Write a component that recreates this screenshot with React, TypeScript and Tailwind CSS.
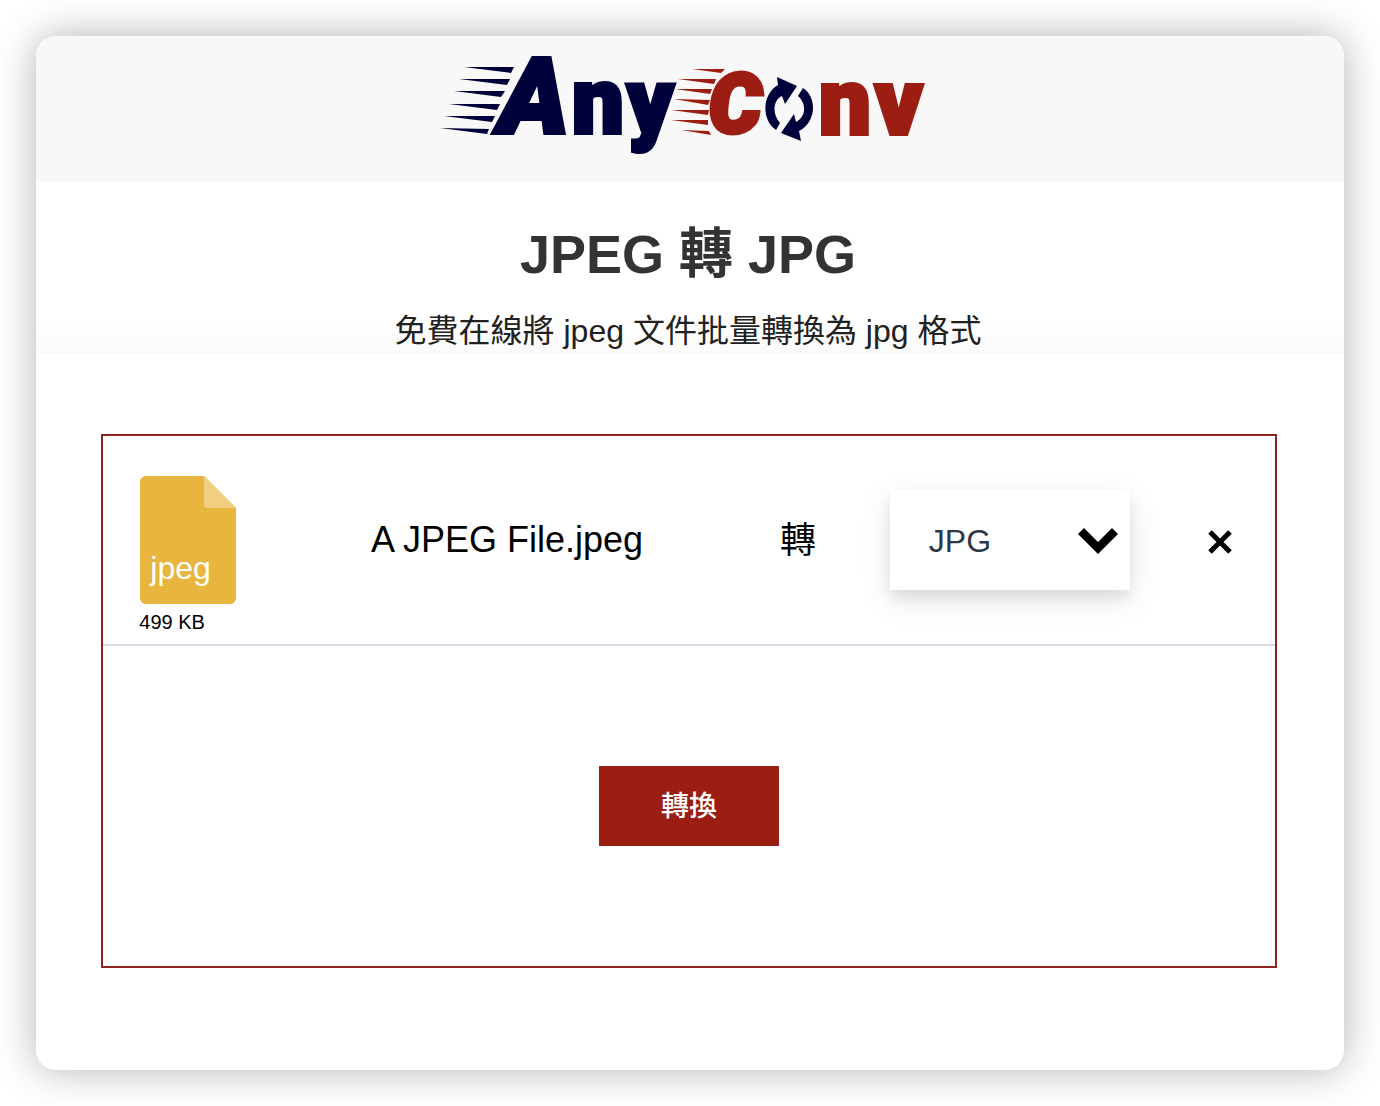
import { useState } from "react";

const NAVY_STREAKS = [
  "464,67 514,67 511,73",
  "459,79 510,79 507,85",
  "454,91 505,91 501,97",
  "449,104 500,104 497,110",
  "444,116 495,116 492,122",
  "440,128 489,129 487,134",
];

const RED_STREAKS = [
  "692,69 725,69 721,73",
  "678,79 716,79 714,84",
  "675,89 712,89 710,94",
  "674,99 710,100 708,105",
  "671,110 709,110 708,115",
  "671,120 708,120 708,125",
  "681,130 709,131 711,135",
];

function Logo() {
  return (
    <svg
      viewBox="440 36 486 146"
      width="486"
      height="146"
      role="img"
      aria-label="AnyConv"
      className="overflow-visible font-['Roboto','Liberation_Sans',sans-serif] font-black"
    >
      <g fill="#00003a">
        {NAVY_STREAKS.map((points) => (
          <polygon key={points} points={points} />
        ))}
        <g stroke="#00003a" strokeWidth="4">
          <text x="499" y="133" fontSize="106" fontStyle="italic">A</text>
          <text x="572" y="133" fontSize="92">n</text>
          <text x="627" y="133" fontSize="90">y</text>
        </g>
        {/* Circular arrows stand in for the "o" */}
        <path d="M777 77 797 86 785 104 782 96C774 99 771 113 780 123L776 130C762 121 761 95 778 85Z" />
        <path d="M803 88C817 97 817 122 799 131L801 141 781 133 794 114 796 122C806 117 807 104 798 96Z" />
      </g>
      <g fill="#9c1e13">
        {RED_STREAKS.map((points) => (
          <polygon key={points} points={points} />
        ))}
        <g stroke="#9c1e13" strokeWidth="5">
          <text x="709" y="132" fontSize="82" fontStyle="italic">C</text>
        </g>
        <g stroke="#9c1e13" strokeWidth="4">
          <text x="819" y="134" fontSize="92">n</text>
          <text x="875" y="134" fontSize="92">v</text>
        </g>
      </g>
    </svg>
  );
}

function FileBadge({ ext, size }: { ext: string; size: string }) {
  return (
    <div className="pl-9 pt-10">
      <div className="relative ml-px w-24 h-32">
        <svg viewBox="0 0 96 128" className="w-24 h-32" aria-hidden="true">
          <path d="M6 0H64L96 32V122a6 6 0 0 1-6 6H6a6 6 0 0 1-6-6V6a6 6 0 0 1 6-6Z" fill="#e8b63e" />
          <path d="M64 0 96 32H68a4 4 0 0 1-4-4Z" fill="#f1cf80" />
        </svg>
        <span className="absolute left-2.5 bottom-4 text-[32px] leading-10 text-white">{ext}</span>
      </div>
      <div className="pt-0.5 text-xl leading-8 text-black">{size}</div>
    </div>
  );
}

export default function App() {
  const [format, setFormat] = useState("jpg");
  const [files, setFiles] = useState([{ name: "A JPEG File.jpeg", ext: "jpeg", size: "499 KB" }]);

  return (
    <div className="min-h-screen bg-white p-9 font-['Liberation_Sans','Noto_Sans_CJK_TC',sans-serif]">
      <div className="rounded-[20px] bg-white pb-[102px] shadow-[0_0_40px_rgba(0,0,0,0.3)]">
        <header className="flex h-[146px] justify-center rounded-t-[20px] bg-[#f8f8f8] pr-[14px]">
          <a href="#" className="block">
            <Logo />
          </a>
        </header>

        <section className="h-[172px] bg-linear-to-b from-white from-80% to-[#fafafa] pt-9 pr-1 text-center">
          <h1 className="text-[54px] leading-[72px] font-bold text-[#333]">JPEG 轉 JPG</h1>
          <p className="pt-[17px] text-[32px] leading-[48px] text-[#212121]">免費在線將 jpeg 文件批量轉換為 jpg 格式</p>
        </section>

        <main className="pt-20 pr-0.5">
          <form
            className="mx-auto w-[90%] border-2 border-[#8f231d]"
            onSubmit={(e) => e.preventDefault()}
          >
            {files.map((file) => (
              <div
                key={file.name}
                className="grid h-[210px] grid-cols-[170fr_468fr_114fr_310fr_110fr] items-center border-b-2 border-[#d6dde5] text-black"
              >
                <div className="self-start">
                  <FileBadge ext={file.ext} size={file.size} />
                </div>
                <div className="text-center text-4xl leading-10">{file.name}</div>
                <label htmlFor="format" className="pt-0.5 text-center text-4xl leading-10">轉</label>
                <div className="relative mx-auto w-60">
                  <select
                    id="format"
                    value={format}
                    onChange={(e) => setFormat(e.target.value)}
                    className="h-[100px] w-full appearance-none bg-white pt-0.5 pl-[39px] text-[32px] text-[#2d3748] shadow-[0_10px_30px_rgba(0,0,30,0.1),0_8px_12px_rgba(0,0,30,0.07)]"
                  >
                    <option value="jpg">JPG</option>
                    <option value="png">PNG</option>
                    <option value="webp">WEBP</option>
                  </select>
                  <svg
                    viewBox="0 0 40 26"
                    className="pointer-events-none absolute top-[38px] right-3 w-10"
                    aria-hidden="true"
                  >
                    <path d="M6 0 20 14 34 0 40 6 20 26 0 6Z" fill="#000" />
                  </svg>
                </div>
                <button
                  type="button"
                  title="Remove"
                  onClick={() => setFiles(files.filter((f) => f !== file))}
                  className="mx-auto flex h-10 w-10 items-center justify-center pt-1"
                >
                  <svg viewBox="0 0 24 24" width="24" height="24" aria-hidden="true">
                    <path d="M2 2 22 22M22 2 2 22" stroke="#000" strokeWidth="5" />
                  </svg>
                </button>
              </div>
            ))}

            <div className="flex justify-center py-[120px]">
              <button
                type="submit"
                className="h-20 w-[180px] bg-[#9c1e13] pt-0.5 text-[28px] leading-10 font-medium text-white"
              >
                轉換
              </button>
            </div>
          </form>
        </main>
      </div>
    </div>
  );
}
